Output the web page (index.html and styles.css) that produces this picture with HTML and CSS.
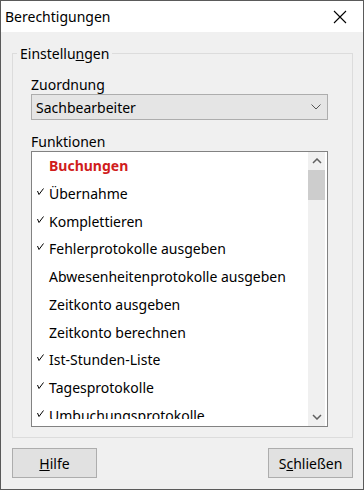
FILE: index.html
```html
<!DOCTYPE html>
<html lang="de">
<head>
    <meta charset="UTF-8">
    <title>Berechtigungen</title>
    <link rel="stylesheet" href="styles.css">
</head>
<body>
    <div class="window">
        <div class="titlebar">
            <span class="title">Berechtigungen</span>
            <svg class="close" width="14" height="14" viewBox="0 0 14 14">
                <path d="M1 1 L13 13 M13 1 L1 13" stroke="#000" stroke-width="1.1" fill="none"/>
            </svg>
        </div>
        <div class="content">
            <fieldset class="group">
                <legend>Einstellu<u>n</u>gen</legend>
                <div class="field-label">Zuordnung</div>
                <div class="combo">
                    <span>Sachbearbeiter</span>
                    <svg width="10" height="6" viewBox="0 0 10 6">
                        <path d="M0.5 0.5 L5 5 L9.5 0.5" stroke="#555" stroke-width="1" fill="none"/>
                    </svg>
                </div>
                <div class="field-label">Funktionen</div>
                <div class="listbox">
                    <ul class="items">
                        <li class="heading">Buchungen</li>
                        <li class="checked">Übernahme</li>
                        <li class="checked">Komplettieren</li>
                        <li class="checked">Fehlerprotokolle ausgeben</li>
                        <li>Abwesenheitenprotokolle ausgeben</li>
                        <li>Zeitkonto ausgeben</li>
                        <li>Zeitkonto berechnen</li>
                        <li class="checked">Ist-Stunden-Liste</li>
                        <li class="checked">Tagesprotokolle</li>
                        <li class="checked">Umbuchungsprotokolle</li>
                    </ul>
                    <div class="scrollbar">
                        <svg class="arrow" width="10" height="6" viewBox="0 0 10 6">
                            <path d="M1 5 L5 1 L9 5" stroke="#606060" stroke-width="1.5" fill="none"/>
                        </svg>
                        <div class="thumb"></div>
                        <div class="track"></div>
                        <svg class="arrow" width="10" height="6" viewBox="0 0 10 6">
                            <path d="M1 1 L5 5 L9 1" stroke="#606060" stroke-width="1.5" fill="none"/>
                        </svg>
                    </div>
                </div>
            </fieldset>
            <div class="buttons">
                <button><u>H</u>ilfe</button>
                <button>S<u>c</u>hließen</button>
            </div>
        </div>
    </div>
</body>
</html>
```

FILE: styles.css
```css
body {
    margin: 0;
    background-color: #f0f0f0;
    font-family: "Noto Sans", "Open Sans", sans-serif;
    font-size: 14px;
    color: #000;
}

.window {
    width: 362px;
    height: 488px;
    border: 1px solid #5a5a5a;
    display: flex;
    flex-direction: column;
    background-color: #f0f0f0;
}

.titlebar {
    height: 31px;
    background-color: #fff;
    display: flex;
    align-items: center;
    justify-content: space-between;
    padding: 0 16px 0 4px;
}

.content {
    flex: 1;
    display: flex;
    flex-direction: column;
    padding: 12px 10px 0 11px;
}

.group {
    margin: 0;
    height: 394px;
    border: 1px solid #dcdcdc;
    padding: 0 24px 0 18px;
    box-sizing: border-box;
}

.group legend {
    padding: 0 3px;
    margin-left: -14px;
}

.field-label {
    margin-top: 13px;
    line-height: 18px;
}

.combo {
    height: 26px;
    box-sizing: border-box;
    background-color: #e5e5e5;
    border: 1px solid #adadad;
    display: flex;
    align-items: center;
    justify-content: space-between;
    padding: 0 6px 0 4px;
}

.listbox {
    height: 276px;
    box-sizing: border-box;
    border: 1px solid #828282;
    background-color: #fff;
    display: flex;
    overflow: hidden;
}

.items {
    flex: 1;
    align-self: flex-start;
    height: 267px;
    overflow: hidden;
    list-style: none;
    margin: 0;
    padding: 0;
}

.items li {
    height: 27.75px;
    line-height: 27.75px;
    padding-left: 17px;
    white-space: nowrap;
    position: relative;
}

.items li.heading {
    color: #d01c1c;
    font-weight: bold;
}

/* small windows-style check mark */
.items li.checked::before {
    content: "";
    position: absolute;
    left: 5px;
    top: 8px;
    width: 7px;
    height: 7px;
    background: url("data:image/svg+xml,%3Csvg xmlns='http://www.w3.org/2000/svg' width='7' height='7'%3E%3Cpath d='M0.5 3 L2 6.5 L6.5 0.5' stroke='%23000' stroke-width='1' fill='none'/%3E%3C/svg%3E") no-repeat;
}

.scrollbar {
    width: 17px;
    margin-right: 2px;
    background-color: #f0f0f0;
    display: flex;
    flex-direction: column;
    align-items: center;
}

.arrow {
    margin: 6px 0;
}

.thumb {
    width: 17px;
    height: 30px;
    background-color: #cdcdcd;
}

.track {
    flex: 1;
}

.buttons {
    display: flex;
    justify-content: space-between;
    margin-top: 10px;
}

button {
    width: 85px;
    height: 30px;
    background-color: #e1e1e1;
    border: 1px solid #adadad;
    font-family: inherit;
    font-size: 14px;
    color: #000;
    padding: 0;
}
```
